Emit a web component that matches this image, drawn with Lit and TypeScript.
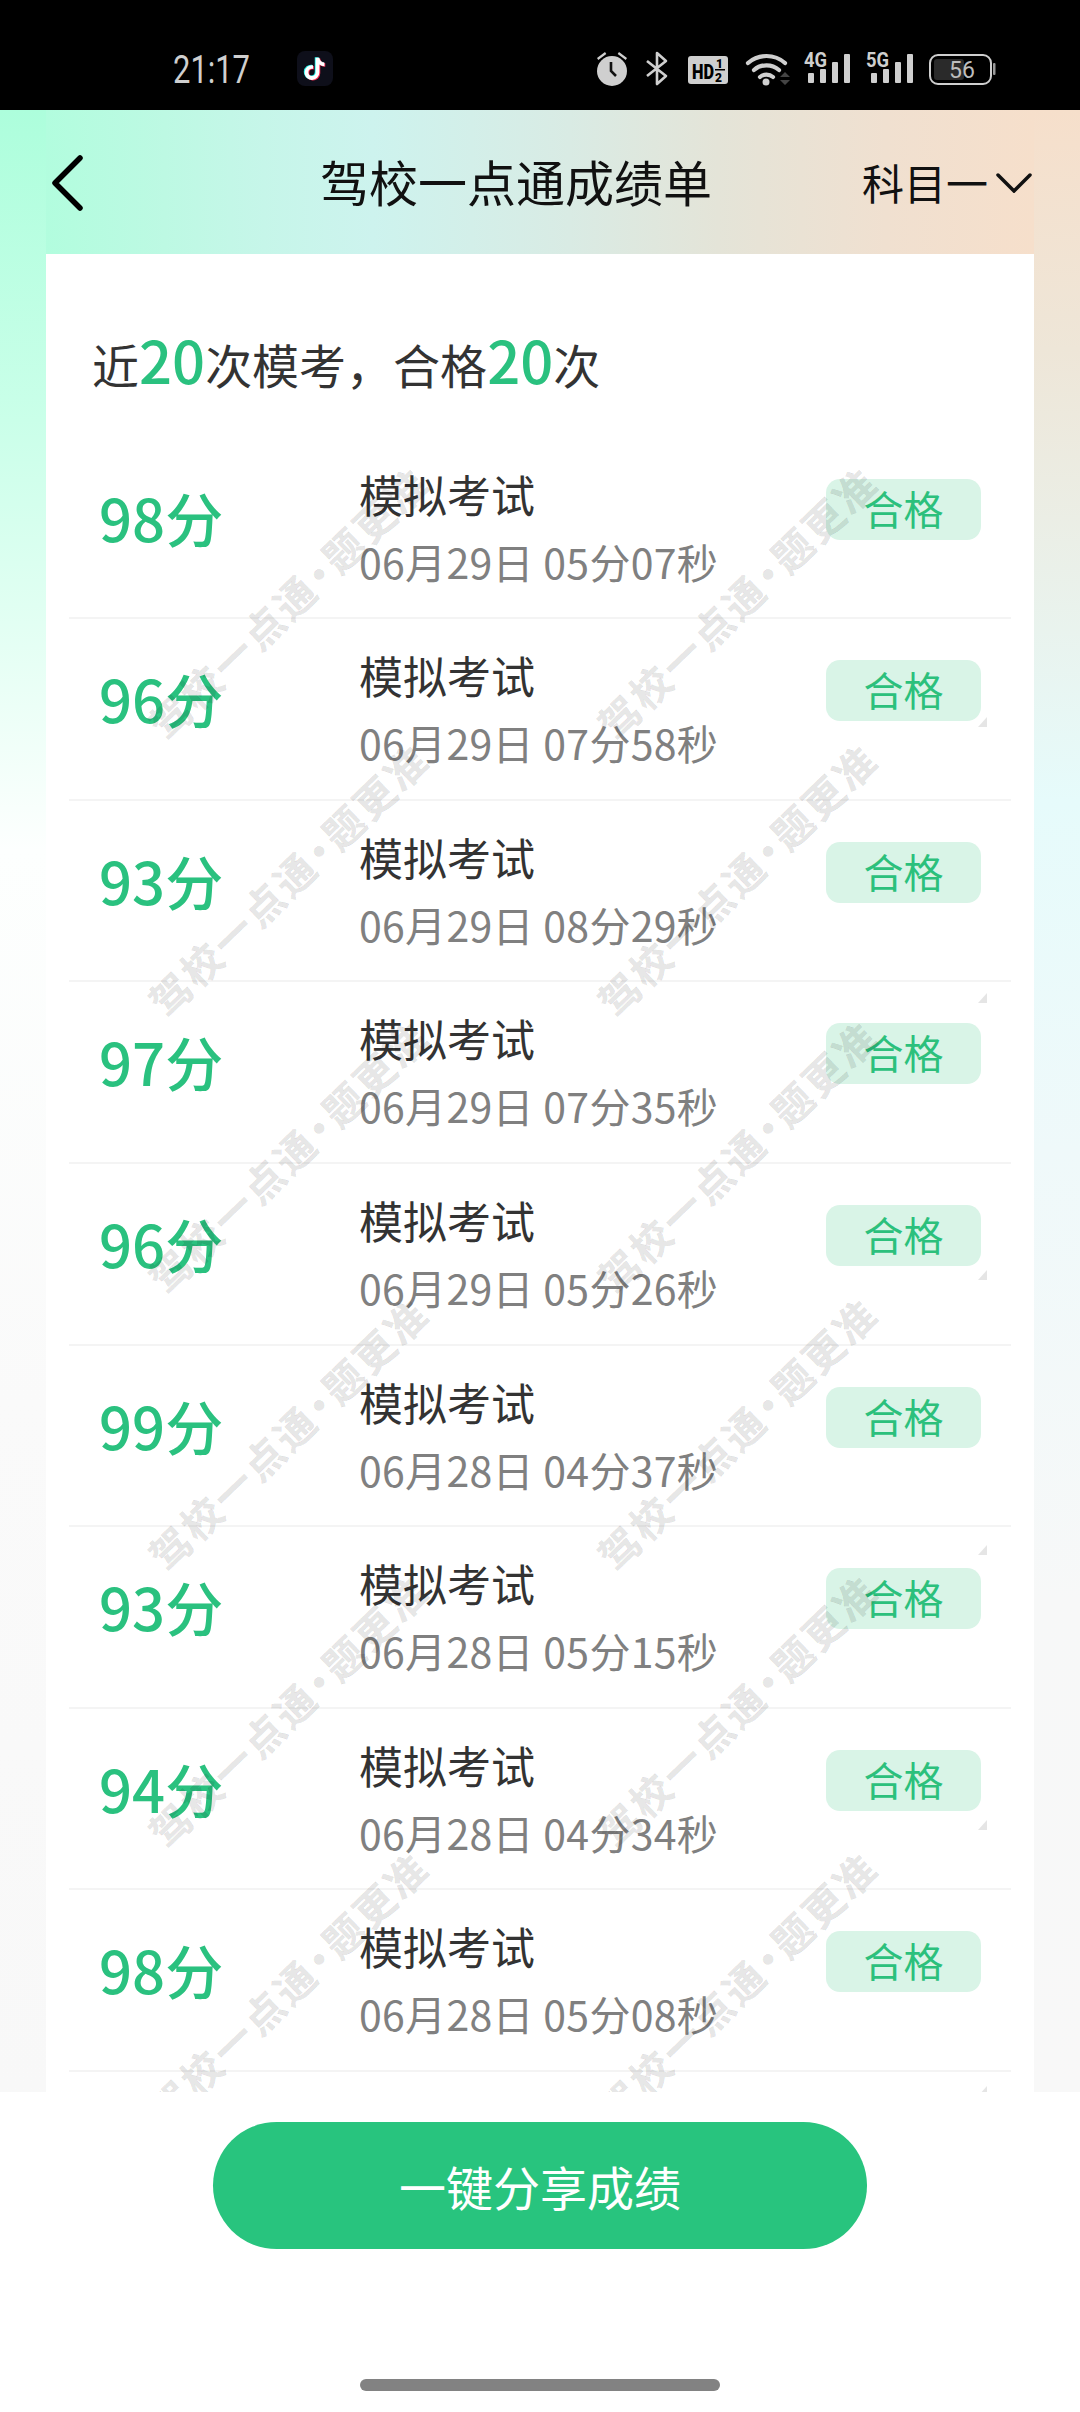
import { LitElement, html, css, svg } from "lit";
import { customElement } from "lit/decorators.js";

const ROWS = [
  ["98", "06月29日 05分07秒"],
  ["96", "06月29日 07分58秒"],
  ["93", "06月29日 08分29秒"],
  ["97", "06月29日 07分35秒"],
  ["96", "06月29日 05分26秒"],
  ["99", "06月28日 04分37秒"],
  ["93", "06月28日 05分15秒"],
  ["94", "06月28日 04分34秒"],
  ["98", "06月28日 05分08秒"],
];

const MARK_COLS = [288 - 46, 737 - 46];
const MARK_ROWS = [0, 1, 2, 3, 4, 5].map((n) => 348 + 277 * n);
const CORNER_ROWS = [717, 993, 1270, 1545, 1820, 2086].map((y) => y - 254);

const bars = (x: number) => svg`
  <rect x=${x} y="73" width="6" height="10" rx="1"/>
  <rect x=${x + 12} y="69" width="6" height="14" rx="1"/>
  <rect x=${x + 24} y="62" width="6" height="21" rx="1"/>
  <rect x=${x + 36} y="54" width="6" height="29" rx="1"/>`;

@customElement("app-root")
export class AppRoot extends LitElement {
  static styles = css`
    :host {
      display: block;
      width: 1080px;
      height: 2412px;
      overflow: hidden;
      font-family: "Noto Sans CJK SC", "Noto Sans", sans-serif;
      color: #333;
    }
    .page {
      height: 2412px;
      display: flex;
      flex-direction: column;
      background:
        linear-gradient(90deg, #b2fdde 0, #bdf9e3 12%, #c6f6e9 22%, #cdf3ee 33%, #d9ebe4 53%, #e4e4d8 68%, #f0e0d0 85%, #f6dfcb 100%) 46px 110px / 988px 144px no-repeat,
        linear-gradient(180deg, #adfedc 110px, #caffe9 420px, #fdfffe 850px, #fafafa 1400px, #f8f8f8 2092px) 0 0 / 540px 100% no-repeat,
        linear-gradient(180deg, #f6dfcb 110px, #eee6d8 350px, #e6fbfb 800px, #eff9fa 1150px, #f7f8f8 1600px, #f8f8f8 2092px) 540px 0 / 540px 100% no-repeat;
    }
    .status {
      flex: none;
      height: 110px;
      background: #000;
    }
    .status svg {
      display: block;
    }
    .time {
      font-family: Roboto, sans-serif;
      font-size: 38px;
      fill: #cfcfcf;
    }
    .bar {
      flex: none;
      height: 144px;
      display: grid;
      grid-template-columns: 320px 542px 1fr;
      align-items: center;
      color: #111;
    }
    .back {
      display: block;
      margin-left: 50px;
      margin-top: 2px;
    }
    .title {
      font-size: 49px;
      line-height: 60px;
      white-space: nowrap;
      margin-top: -3px;
    }
    .subject {
      display: flex;
      align-items: center;
      font-size: 42px;
      line-height: 56px;
      margin-top: -1px;
    }
    .subject svg {
      margin-left: 8px;
      margin-top: 3px;
    }
    .card {
      flex: 1;
      min-height: 0;
      margin: 0 46px;
      background: #fff;
      position: relative;
      overflow: hidden;
    }
    .summary {
      box-sizing: border-box;
      height: 183.6px;
      padding: 65px 0 0 46px;
      font-size: 47px;
      line-height: 80px;
      white-space: nowrap;
    }
    .summary b {
      font-size: 58px;
      font-weight: 500;
      color: #2ac17f;
    }
    .list {
      margin: 0 23px;
    }
    .row {
      box-sizing: border-box;
      height: 181.6px;
      padding: 26px 30px 0 30px;
      border-bottom: 2px solid #f4f4f4;
      display: flex;
      align-items: flex-start;
    }
    .score {
      width: 260px;
      flex: none;
      margin-top: 13px;
      font-size: 58px;
      line-height: 80px;
      font-weight: 500;
      color: #2ac17f;
      white-space: nowrap;
    }
    .main {
      flex: 1;
      min-width: 0;
    }
    .name {
      font-size: 44px;
      line-height: 60px;
      color: #333;
    }
    .date {
      margin-top: 11px;
      font-size: 41px;
      letter-spacing: 0.3px;
      line-height: 52px;
      color: #808080;
      white-space: nowrap;
    }
    .tag {
      flex: none;
      width: 155px;
      height: 61px;
      margin-top: 15px;
      border-radius: 14px;
      background: #d9f4e7;
      color: #2cc07c;
      font-size: 40px;
      line-height: 59px;
      text-align: center;
    }
    .marks {
      position: absolute;
      inset: 0;
      pointer-events: none;
    }
    .mark {
      position: absolute;
      transform: translate(-50%, -50%) rotate(-44deg);
      font-size: 40px;
      font-weight: 700;
      letter-spacing: 3px;
      line-height: 50px;
      white-space: nowrap;
      color: rgba(0, 0, 0, 0.1);
      -webkit-text-stroke: 1.2px rgba(0, 0, 0, 0.04);
    }
    .dot {
      letter-spacing: -16px;
      margin-left: -9px;
      margin-right: 10px;
    }
    .corner {
      position: absolute;
      left: 932px;
      width: 9px;
      height: 10px;
      background: rgba(0, 0, 0, 0.1);
      clip-path: polygon(100% 0, 100% 100%, 0 100%);
    }
    .foot {
      flex: none;
      height: 320px;
      background: #fff;
      display: flex;
      flex-direction: column;
      align-items: center;
    }
    .share {
      margin-top: 30px;
      width: 654px;
      height: 127px;
      border-radius: 64px;
      background: #28c47e;
      color: #fff;
      font-size: 47px;
      line-height: 127px;
      text-align: center;
    }
    .home {
      margin-top: 130px;
      width: 360px;
      height: 12px;
      border-radius: 6px;
      background: #828282;
    }
  `;

  private statusBar() {
    return html`<div class="status">
      <svg width="1080" height="110" viewBox="0 0 1080 110">
        <text class="time" x="173" y="83" textLength="77" lengthAdjust="spacingAndGlyphs">21:17</text>
        <rect x="297" y="51" width="36" height="35" rx="8" fill="#0e0f1a"/>
        <g transform="translate(300 54) scale(1.25)">
          <path d="M12.5 3v11.6a2.9 2.9 0 1 1-2.9-2.9c.3 0 .5 0 .8.1V9a5.9 5.9 0 1 0 5.1 5.8V8.4a7 7 0 0 0 4 1.3V6.8a4 4 0 0 1-4-3.8z" fill="#25f4ee" transform="translate(-.7 -.4)"/>
          <path d="M12.5 3v11.6a2.9 2.9 0 1 1-2.9-2.9c.3 0 .5 0 .8.1V9a5.9 5.9 0 1 0 5.1 5.8V8.4a7 7 0 0 0 4 1.3V6.8a4 4 0 0 1-4-3.8z" fill="#fe2c55" transform="translate(.7 .5)"/>
          <path d="M12.5 3v11.6a2.9 2.9 0 1 1-2.9-2.9c.3 0 .5 0 .8.1V9a5.9 5.9 0 1 0 5.1 5.8V8.4a7 7 0 0 0 4 1.3V6.8a4 4 0 0 1-4-3.8z" fill="#fff"/>
        </g>

        <g fill="#cfcfcf" stroke="none">
          <circle cx="612" cy="71" r="15"/>
          <path d="M597 58l8-6 1.300 2-8 6zM627 58l-8-6-1.300 2 8 6z"/>
        </g>
        <path d="M611 62v9l5 5" fill="none" stroke="#111" stroke-width="2.600"/>

        <path d="M647 61l19 15-9 8V53l9 8-19 15" fill="none" stroke="#cfcfcf" stroke-width="2.600" stroke-linejoin="round"/>

        <rect x="688" y="56" width="40" height="28" rx="3" fill="#cfcfcf"/>
        <text x="692" y="79" font-family="Roboto, sans-serif" font-weight="900" font-size="21" fill="#000" textLength="22" lengthAdjust="spacingAndGlyphs">HD</text>
        <text x="716" y="68" font-family="Roboto, sans-serif" font-weight="900" font-size="12" fill="#000">1</text>
        <rect x="715" y="69" width="10" height="1.500" fill="#000"/>
        <text x="715" y="82" font-family="Roboto, sans-serif" font-weight="900" font-size="12" fill="#000">2</text>

        <g fill="none" stroke="#cfcfcf" stroke-width="4.200" stroke-linecap="round">
          <path d="M748 63a28 28 0 0 1 37 0"/>
          <path d="M754 70a19 19 0 0 1 25 0"/>
          <path d="M760 77a10 10 0 0 1 13 0"/>
        </g>
        <circle cx="766" cy="82" r="3.500" fill="#cfcfcf"/>
        <path d="M780 77l5-5 5 5zM780 80l5 5 5-5z" fill="#444"/>

        <g fill="#cfcfcf">
          <text x="804" y="67" font-family="Roboto, sans-serif" font-weight="700" font-size="20" textLength="23" lengthAdjust="spacingAndGlyphs">4G</text>
          ${bars(808)}
          <text x="866" y="67" font-family="Roboto, sans-serif" font-weight="700" font-size="20" textLength="23" lengthAdjust="spacingAndGlyphs">5G</text>
          ${bars(871)}
        </g>

        <rect x="930" y="55" width="61" height="29" rx="8" fill="none" stroke="#cfcfcf" stroke-width="2"/>
        <rect x="934" y="59" width="30" height="21" rx="3" fill="#2a2a2a"/>
        <rect x="993" y="63" width="2.500" height="12" rx="1" fill="#9a9a9a"/>
        <text x="962" y="78" text-anchor="middle" font-family="Roboto, sans-serif" font-size="23" fill="#bdbdbd">56</text>
      </svg>
    </div>`;
  }

  render() {
    return html`<div class="page">
      ${this.statusBar()}
      <div class="bar">
        <svg class="back" width="34" height="56" viewBox="0 0 34 56">
          <path d="M30 3L5 28l25 25" fill="none" stroke="#000" stroke-width="5.500" stroke-linecap="round" stroke-linejoin="round"/>
        </svg>
        <div class="title">驾校一点通成绩单</div>
        <div class="subject">
          科目一
          <svg width="36" height="20" viewBox="0 0 36 20">
            <path d="M2 2l16 16L34 2" fill="none" stroke="#111" stroke-width="3.500" stroke-linecap="round"/>
          </svg>
        </div>
      </div>
      <div class="card">
        <div class="summary">近<b>20</b>次模考，合格<b>20</b>次</div>
        <div class="list">
          ${ROWS.map(
            ([score, date]) => html`<div class="row">
              <div class="score">${score}分</div>
              <div class="main">
                <div class="name">模拟考试</div>
                <div class="date">${date}</div>
              </div>
              <div class="tag">合格</div>
            </div>`
          )}
        </div>
        <div class="marks">
          ${MARK_COLS.flatMap((x) =>
            MARK_ROWS.map(
              (y) => html`<div class="mark" style="left:${x}px;top:${y}px">驾校一点通<span class="dot">·</span>题更准</div>`
            )
          )}
          ${CORNER_ROWS.map((y) => html`<div class="corner" style="top:${y}px"></div>`)}
        </div>
      </div>
      <div class="foot">
        <div class="share">一键分享成绩</div>
        <div class="home"></div>
      </div>
    </div>`;
  }
}
